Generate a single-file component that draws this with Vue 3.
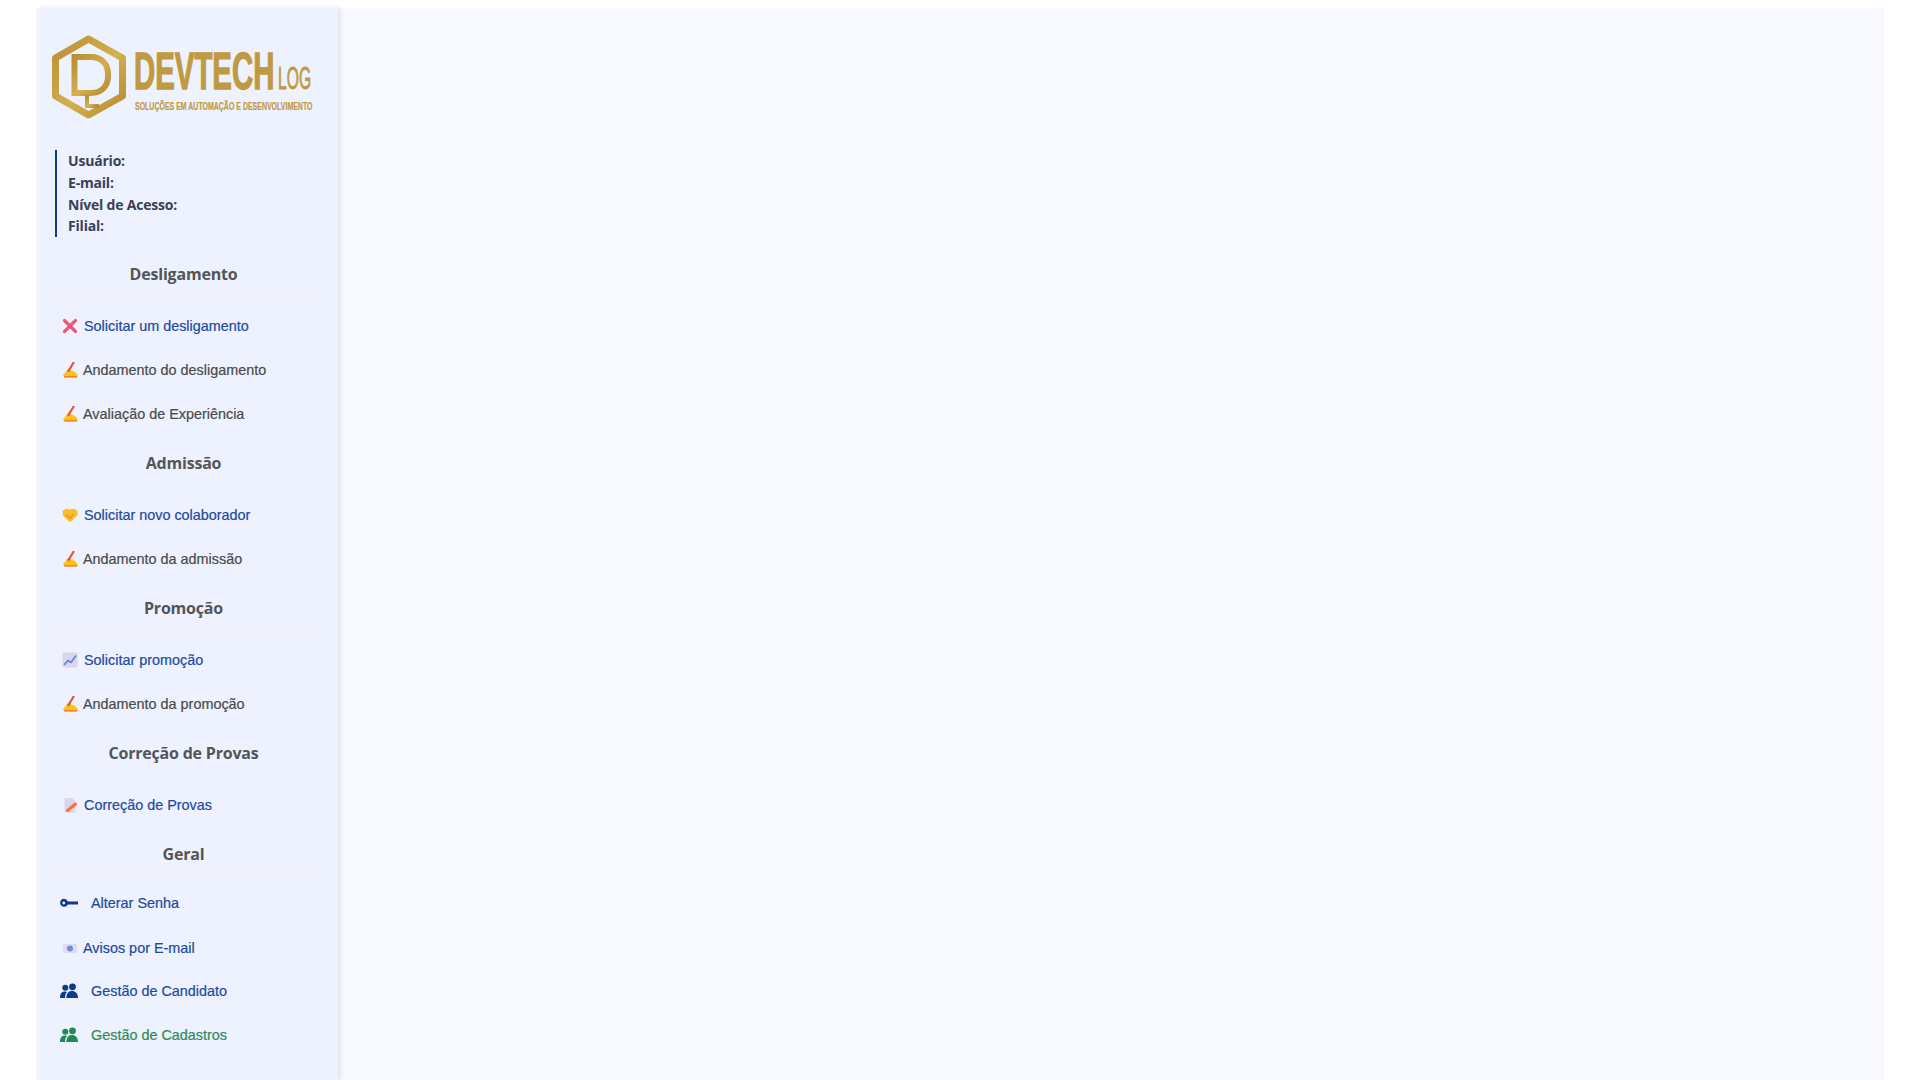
<script setup>
const sections = [
  {
    title: 'Desligamento',
    items: [
      { label: 'Solicitar um desligamento', icon: 'cross', tone: 'link' },
      { label: 'Andamento do desligamento', icon: 'hand', tone: 'gray' },
      { label: 'Avaliação de Experiência', icon: 'hand', tone: 'gray' }
    ]
  },
  {
    title: 'Admissão',
    items: [
      { label: 'Solicitar novo colaborador', icon: 'shake', tone: 'link' },
      { label: 'Andamento da admissão', icon: 'hand', tone: 'gray' }
    ]
  },
  {
    title: 'Promoção',
    items: [
      { label: 'Solicitar promoção', icon: 'chart', tone: 'link' },
      { label: 'Andamento da promoção', icon: 'hand', tone: 'gray' }
    ]
  },
  {
    title: 'Correção de Provas',
    items: [{ label: 'Correção de Provas', icon: 'memo', tone: 'link' }]
  },
  {
    title: 'Geral',
    compact: true,
    items: [
      { label: 'Alterar Senha', icon: 'key', tone: 'link' },
      { label: 'Avisos por E-mail', icon: 'mail', tone: 'link', nudge: true },
      { label: 'Gestão de Candidato', icon: 'users', tone: 'link' },
      { label: 'Gestão de Cadastros', icon: 'users', tone: 'green' }
    ]
  }
];

const userFields = ['Usuário:', 'E-mail:', 'Nível de Acesso:', 'Filial:'];
</script>

<template>
  <div class="page">
    <aside class="sidebar">
      <div class="logo">
        <svg class="logo-mark" width="74" height="84" viewBox="0 0 74 84" fill="none">
          <defs>
            <linearGradient id="gold" x1="0" y1="0" x2="1" y2="1">
              <stop offset="0" stop-color="#b98f35" />
              <stop offset="0.55" stop-color="#d4b04e" />
              <stop offset="1" stop-color="#b58a30" />
            </linearGradient>
          </defs>
          <path d="M36.5 4 70.5 23V61L36.5 80 3.5 61V23Z" stroke="url(#gold)" stroke-width="7" stroke-linejoin="round" />
          <path d="M22.5 22H39C49.5 22 56 29 56 39V41C56 51 49.5 58 39 58H22.5Z" stroke="url(#gold)" stroke-width="6" />
          <path d="M36 32V50" stroke="url(#gold)" stroke-width="4.5" />
          <path d="M35 60V71H47" stroke="url(#gold)" stroke-width="4" />
        </svg>
        <div class="logo-text">
          <div class="logo-top">
            <span class="logo-name">DEVTECH</span>
            <span class="logo-log">LOG</span>
          </div>
          <div class="logo-tag">SOLUÇÕES EM AUTOMAÇÃO E DESENVOLVIMENTO</div>
        </div>
      </div>

      <div class="user-info">
        <div v-for="field in userFields" :key="field">{{ field }}</div>
      </div>

      <section v-for="section in sections" :key="section.title" class="group" :class="{ compact: section.compact }">
        <h3>{{ section.title }}</h3>
        <a
          v-for="item in section.items"
          :key="item.label"
          class="row"
          :class="[item.tone, {
            wide: item.icon === 'key' || item.icon === 'users',
            tight: item.icon === 'hand' || item.icon === 'mail',
            nudge: item.nudge
          }]"
        >
          <svg v-if="item.icon === 'cross'" class="ico" viewBox="0 0 16 16">
            <path d="M2.5 2.5 13.5 13.5M13.5 2.5 2.5 13.5" stroke="#f4557c" stroke-width="3.2" stroke-linecap="round" />
          </svg>
          <svg v-else-if="item.icon === 'hand'" class="ico" viewBox="0 0 16 16">
            <path d="M1 13.5C2 11.5 3.5 10.5 5 8L7.5 6 9.5 8.5 13 10 15.5 12.5V15.5H3Z" fill="#fcc21b" />
            <path d="M11.5.8 6.5 9" stroke="#e2533f" stroke-width="2.2" stroke-linecap="round" />
            <path d="M2 14.8H15" stroke="#f0792c" stroke-width="1.3" />
          </svg>
          <svg v-else-if="item.icon === 'shake'" class="ico" viewBox="0 0 16 16">
            <path d="M.5 4 4 1.5 8 2.5 12 1.5 15.5 4V8L9 14.5 7 14.5 1 8.5Z" fill="#fcbb2a" />
            <path d="M4 8 8 11 11.5 7.5" stroke="#ef8e22" stroke-width="1.4" fill="none" />
          </svg>
          <svg v-else-if="item.icon === 'chart'" class="ico" viewBox="0 0 16 16">
            <rect x="0.5" y="0.5" width="15" height="15" rx="1.5" fill="#d9d5ee" />
            <path d="M2 13 6 8.5 9 10.5 14 3.5" stroke="#5b86c9" stroke-width="1.6" fill="none" />
          </svg>
          <svg v-else-if="item.icon === 'memo'" class="ico" viewBox="0 0 16 16">
            <path d="M2.5 1H10L13.5 4.5V15.5H2.5Z" fill="#d9d5ee" />
            <path d="M5.5 13.5 13.5 7" stroke="#f0743a" stroke-width="3" stroke-linecap="round" />
          </svg>
          <svg v-else-if="item.icon === 'mail'" class="ico" viewBox="0 0 16 16">
            <rect x="1" y="4" width="14" height="9" fill="#e0daf2" />
            <circle cx="8" cy="8.5" r="3" fill="#6d8fd8" />
          </svg>
          <svg v-else-if="item.icon === 'key'" class="ico" viewBox="0 0 18 16">
            <path d="M4 3.8A4 4 0 0 1 7.8 6.5H18V9.5H7.8A4 4 0 1 1 4 3.8ZM3.8 6.6A1.4 1.4 0 1 0 3.8 9.4 1.4 1.4 0 0 0 3.8 6.6Z" fill="#0d3b8c" fill-rule="evenodd" />
          </svg>
          <svg v-else-if="item.icon === 'users'" class="ico" viewBox="0 0 18 16">
            <g :fill="item.tone === 'green' ? '#1f8a52' : '#0d3b8c'">
              <circle cx="5.3" cy="4.8" r="3" />
              <circle cx="12.5" cy="3.8" r="3.4" />
              <path d="M0 15C0 10.5 2 8.5 5 8.5 5.8 8.5 6.5 8.7 7 9 5.6 10.4 5 12.4 5 15Z" />
              <path d="M6.3 15C6.3 10.5 8.8 8 12 8S18 10.5 18 15Z" />
            </g>
          </svg>
          <span>{{ item.label }}</span>
        </a>
      </section>
    </aside>
    <main class="content"></main>
  </div>
</template>

<style>
html,
body {
  background: #fff;
  overflow: hidden;
}
</style>

<style scoped>
.page {
  display: flex;
  height: 1072px;
  padding: 8px 36px 0 37px;
}

.sidebar {
  width: 301px;
  flex-shrink: 0;
  padding-top: 27px;
  box-sizing: border-box;
  background: #eef2fe;
  box-shadow: 2px 0 4px rgba(0, 0, 0, 0.1);
  position: relative;
  overflow: hidden;
}

.content {
  flex: 1;
  background: #f8f9fe;
}

.logo {
  display: flex;
  gap: 8px;
  margin-left: 15px;
  height: 84px;
}

.logo-mark {
  flex-shrink: 0;
}

.logo-text {
  width: 180px;
  padding-top: 8px;
  color: #c09a42;
  font-family: "Liberation Sans", sans-serif;
  white-space: nowrap;
}

.logo-top {
  display: flex;
  align-items: flex-end;
  height: 57px;
}

.logo-name {
  font-size: 52px;
  font-weight: 700;
  line-height: 57px;
  -webkit-text-stroke: 1.4px #c09a42;
  transform: scaleX(0.565);
  transform-origin: left bottom;
  width: 144px;
}

.logo-log {
  font-size: 32px;
  line-height: 36px;
  -webkit-text-stroke: 0.9px #c09a42;
  transform: scaleX(0.49);
  transform-origin: left bottom;
  width: 40px;
  margin-bottom: 4px;
}

.logo-tag {
  font-size: 11px;
  font-weight: 700;
  line-height: 12px;
  margin-top: 0;
  margin-left: 1px;
  -webkit-text-stroke: 0.2px #c09a42;
  transform: scaleX(0.635);
  transform-origin: left center;
}

.user-info {
  margin: 31px 0 0 18px;
  padding-left: 11px;
  border-left: 2.5px solid #0d3b8c;
  font-family: "Open Sans", sans-serif;
  font-size: 14px;
  font-weight: 700;
  line-height: 21.75px;
  color: #3a4057;
  letter-spacing: -0.2px;
}

.group h3 {
  margin: 17px 26px 9px 18px;
  padding-bottom: 10px;
  border-bottom: 1px solid #f1efee;
  font-family: "Open Sans", sans-serif;
  font-size: 16px;
  font-weight: 700;
  line-height: 20px;
  text-align: center;
  color: #555;
  letter-spacing: -0.2px;
}

.group:first-of-type h3 {
  margin-top: 27px;
}

.group.compact h3 {
  margin-bottom: 6px;
}

.row {
  display: flex;
  align-items: center;
  height: 44px;
  padding-left: 25px;
  font-family: "Liberation Sans", sans-serif;
  font-size: 14.4px;
  -webkit-text-stroke: 0.2px currentColor;
}

.row.wide {
  padding-left: 23px;
}

.row.nudge {
  margin: 1px 0 -1px;
}

.ico {
  width: 16px;
  height: 16px;
  margin-right: 6px;
  flex-shrink: 0;
}

.row.tight .ico {
  margin-right: 5px;
}

.row.wide .ico {
  width: 18px;
  margin-right: 13px;
}

.link {
  color: #1c4a9f;
}

.gray {
  color: #4a4a4a;
}

.green {
  color: #2e8b57;
}
</style>
